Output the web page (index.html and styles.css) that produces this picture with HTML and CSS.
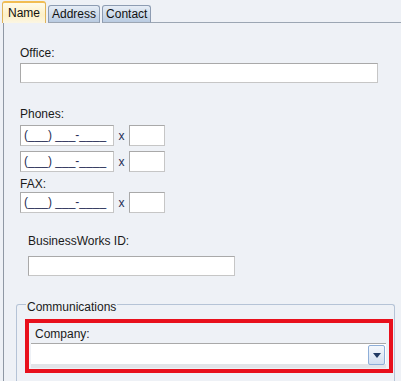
FILE: index.html
```html
<!DOCTYPE html>
<html>
<head>
<meta charset="utf-8">
<link rel="stylesheet" href="styles.css">
</head>
<body>
<div class="tabs">
  <div class="tab active">Name</div>
  <div class="tab">Address</div>
  <div class="tab">Contact</div>
  <div class="tab-fill"></div>
</div>
<div class="panel">
  <div class="label office-label">Office:</div>
  <div class="input office-input"></div>

  <div class="label phones-label">Phones:</div>
  <div class="phone-row first">
    <div class="input phone">(___) ___-____</div>
    <span class="x">x</span>
    <div class="input ext"></div>
  </div>
  <div class="phone-row second">
    <div class="input phone">(___) ___-____</div>
    <span class="x">x</span>
    <div class="input ext"></div>
  </div>
  <div class="label fax-label">FAX:</div>
  <div class="phone-row fax">
    <div class="input phone">(___) ___-____</div>
    <span class="x">x</span>
    <div class="input ext"></div>
  </div>

  <div class="bw">
    <div class="label bw-label">BusinessWorks ID:</div>
    <div class="input bw-input"></div>
  </div>

  <fieldset class="comms">
    <legend>Communications</legend>
    <div class="highlight">
      <div class="label company-label">Company:</div>
      <div class="combo">
        <div class="combo-text"></div>
        <div class="combo-btn">
          <svg width="8" height="5" viewBox="0 0 8 5"><path d="M0 0H8L4 5Z" fill="#1f3a64"/></svg>
        </div>
      </div>
    </div>
  </fieldset>
</div>
</body>
</html>
```
FILE: styles.css
```css
html, body {
  margin: 0;
  padding: 0;
  background: #eef1f6;
  width: 401px;
  height: 381px;
  overflow: hidden;
  font-family: "Liberation Sans", Arial, sans-serif;
  font-size: 12px;
  color: #1a1a1a;
}
.tabs {
  display: flex;
  align-items: flex-end;
  height: 23px;
  padding-left: 2px;
  box-sizing: border-box;
}
.tab {
  height: 18px;
  box-sizing: border-box;
  margin-right: 2px;
  padding: 0 3px;
  line-height: 16px;
  font-size: 12px;
  border: 1px solid #8d9cb2;
  border-bottom: 1px solid #9ca6b3;
  border-radius: 3px 3px 0 0;
  background: linear-gradient(#e6edf6, #b9cbe1);
  color: #111;
}
.tab.active {
  height: 22px;
  padding: 2px 5px 0 5px;
  line-height: 16px;
  border-color: #e0b45a;
  border-top: 2px solid #f2bd52;
  border-bottom: none;
  background: linear-gradient(#fffbea, #fdf0c6 60%, #fbf6e4);
}
.tab-fill {
  flex: 1;
  align-self: flex-end;
  height: 1px;
  margin-left: -2px;
  background: #9ca6b3;
}
.panel {
  margin-left: 3px;
  border-left: 1px solid #8f98a4;
  height: 358px;
  padding-left: 16px;
  box-sizing: border-box;
  display: flex;
  flex-direction: column;
  align-items: flex-start;
}
.panel > * {
  flex-shrink: 0;
}
.label {
  line-height: 14px;
}
.input {
  background: #fff;
  border: 1px solid #a9a9a9;
  border-right-color: #c6c6c6;
  border-bottom-color: #c6c6c6;
  box-sizing: border-box;
}
.office-label { margin-top: 23px; }
.office-input { margin-top: 3px; width: 358px; height: 20px; }
.phones-label { margin-top: 24px; }
.phone-row {
  display: flex;
  align-items: center;
}
.phone-row.first { margin-top: 4px; }
.phone-row.second { margin-top: 5px; }
.phone-row.fax { margin-top: 1px; }
.phone {
  width: 94px;
  height: 21px;
  line-height: 19px;
  padding-left: 3px;
  color: #1f2c55;
  font-size: 12px;
}
.x {
  width: 15px;
  text-align: center;
  color: #1f2c55;
}
.ext { width: 36px; height: 21px; }
.fax-label { margin-top: 5px; }
.bw {
  margin-left: 8px;
  margin-top: 21px;
}
.bw-input { margin-top: 8px; width: 207px; height: 20px; }
.comms {
  margin: 19px 0 0 -4px;
  width: 379px;
  height: 86px;
  box-sizing: border-box;
  border: 1px solid #b5c3d6;
  border-bottom: none;
  border-radius: 3px 3px 0 0;
  padding: 5px 1px 0 8px;
}
.comms legend {
  padding: 5px 1px 0 1px;
  margin-left: 1px;
  line-height: 14px;
  color: #1a1a1a;
}
.highlight {
  border: 4px solid #e8101c;
  padding: 4px 3px 1px 2px;
  box-sizing: border-box;
}
.company-label {
  padding-left: 4px;
}
.combo {
  margin-top: 2px;
  display: flex;
  align-items: center;
  height: 25px;
  background: linear-gradient(#ffffff 82%, #e2e4e8 84%, #e2e4e8);
  border-top: 1px solid #a9a9a9;
  box-sizing: border-box;
  padding-right: 1px;
}
.combo-text { flex: 1; }
.combo-btn {
  width: 17px;
  height: 20px;
  margin-bottom: 2px;
  box-sizing: border-box;
  border: 1px solid #8eaed8;
  border-radius: 2px;
  background: linear-gradient(#f4f8fd, #d3e0f1);
  display: flex;
  align-items: center;
  justify-content: center;
}
```
